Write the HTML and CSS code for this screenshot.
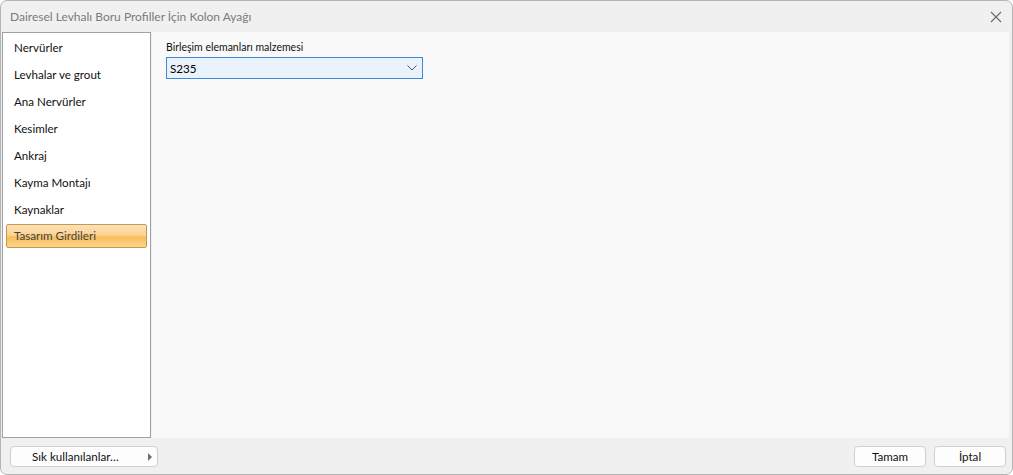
FILE: index.html
```html
<!DOCTYPE html>
<html>
<head>
  <meta charset="utf-8">
  <title>Dairesel Levhalı Boru Profiller İçin Kolon Ayağı</title>
  <link rel="stylesheet" href="styles.css">
</head>
<body>
  <div class="window">
    <div class="titlebar">
      <span class="title">Dairesel Levhalı Boru Profiller İçin Kolon Ayağı</span>
      <svg class="close" width="12" height="12" viewBox="0 0 12 12">
        <path d="M1 1 L11 11 M11 1 L1 11" stroke="#6b6b6b" stroke-width="1.1" fill="none"/>
      </svg>
    </div>

    <div class="body">
      <div class="nav">
        <div class="nav-item">Nervürler</div>
        <div class="nav-item">Levhalar ve grout</div>
        <div class="nav-item">Ana Nervürler</div>
        <div class="nav-item">Kesimler</div>
        <div class="nav-item">Ankraj</div>
        <div class="nav-item">Kayma Montajı</div>
        <div class="nav-item">Kaynaklar</div>
        <div class="nav-item active">Tasarım Girdileri</div>
      </div>

      <div class="content">
        <label class="field-label" for="material">Birleşim elemanları malzemesi</label>
        <div class="select" id="material">
          <span>S235</span>
          <svg width="10" height="6" viewBox="0 0 10 6">
            <path d="M0.5 0.5 L5 5 L9.5 0.5" stroke="#555" stroke-width="1" fill="none"/>
          </svg>
        </div>
      </div>
    </div>

    <div class="footer">
      <button class="button favorites">
        <span>Sık kullanılanlar…</span>
        <svg class="arrow" width="4" height="8" viewBox="0 0 4 8"><path d="M0 0 L4 4 L0 8 Z" fill="#707070"/></svg>
      </button>
      <div class="actions">
        <button class="button">Tamam</button>
        <button class="button">İptal</button>
      </div>
    </div>
  </div>
</body>
</html>
```

FILE: styles.css
```css
* {
  box-sizing: border-box;
}

body {
  margin: 0;
  width: 1013px;
  height: 475px;
  overflow: hidden;
  font-family: 'Lato', 'Open Sans', sans-serif;
  font-size: 12px;
  color: #000;
  background: #fff;
}

.window {
  width: 1013px;
  height: 475px;
  display: flex;
  flex-direction: column;
  background: #f0f0f0;
  border: 1px solid #b4b4b4;
  border-radius: 7px;
  overflow: hidden;
}

.titlebar {
  height: 31px;
  display: flex;
  align-items: center;
  justify-content: space-between;
  padding: 0 10px 0 9px;
}

.title {
  font-size: 12px;
  color: #7b7b7b;
}

.body {
  flex: 1;
  display: flex;
  padding: 0 3px 0 1px;
}

.nav {
  width: 149px;
  background: #fff;
  border: 1px solid #a0a0a0;
  padding: 1px 3px;
}

.nav-item {
  height: 27px;
  line-height: 27px;
  padding-left: 8px;
  font-size: 11.6px;
  color: #111;
}

.nav-item.active {
  height: 24px;
  line-height: 22px;
  margin-top: 1px;
  padding-left: 7px;
  color: #444;
  border: 1px solid #c19a5a;
  border-radius: 2px;
  background: linear-gradient(#fde1b4 0%, #fbd394 45%, #f9bd58 55%, #fbd58c 100%);
}

.content {
  flex: 1;
  margin-left: 1px;
  border-left: 1px solid #fbfbfb;
  background: #f9f9f9;
  padding: 9px 13px;
}

.field-label {
  display: block;
  font-size: 10.5px;
  color: #111;
  margin-bottom: 4px;
}

.select {
  width: 257px;
  height: 22px;
  display: flex;
  align-items: center;
  justify-content: space-between;
  padding: 0 5px 0 3px;
  background: #eaf2fb;
  border: 1px solid #3e8ad8;
  font-size: 11.6px;
}

.footer {
  height: 36px;
  display: flex;
  align-items: center;
  justify-content: space-between;
  padding: 1px 6px 0 9px;
}

.button {
  font-family: inherit;
  font-size: 11.6px;
  color: #111;
  height: 21px;
  width: 72px;
  background: #fdfdfd;
  border: 1px solid #d0d0d0;
  border-radius: 4px;
  padding: 0;
}

.button.favorites {
  width: 148px;
  display: flex;
  align-items: center;
  justify-content: space-between;
  padding: 0 5px 0 21px;
}

.actions {
  display: flex;
  gap: 8px;
}
```
